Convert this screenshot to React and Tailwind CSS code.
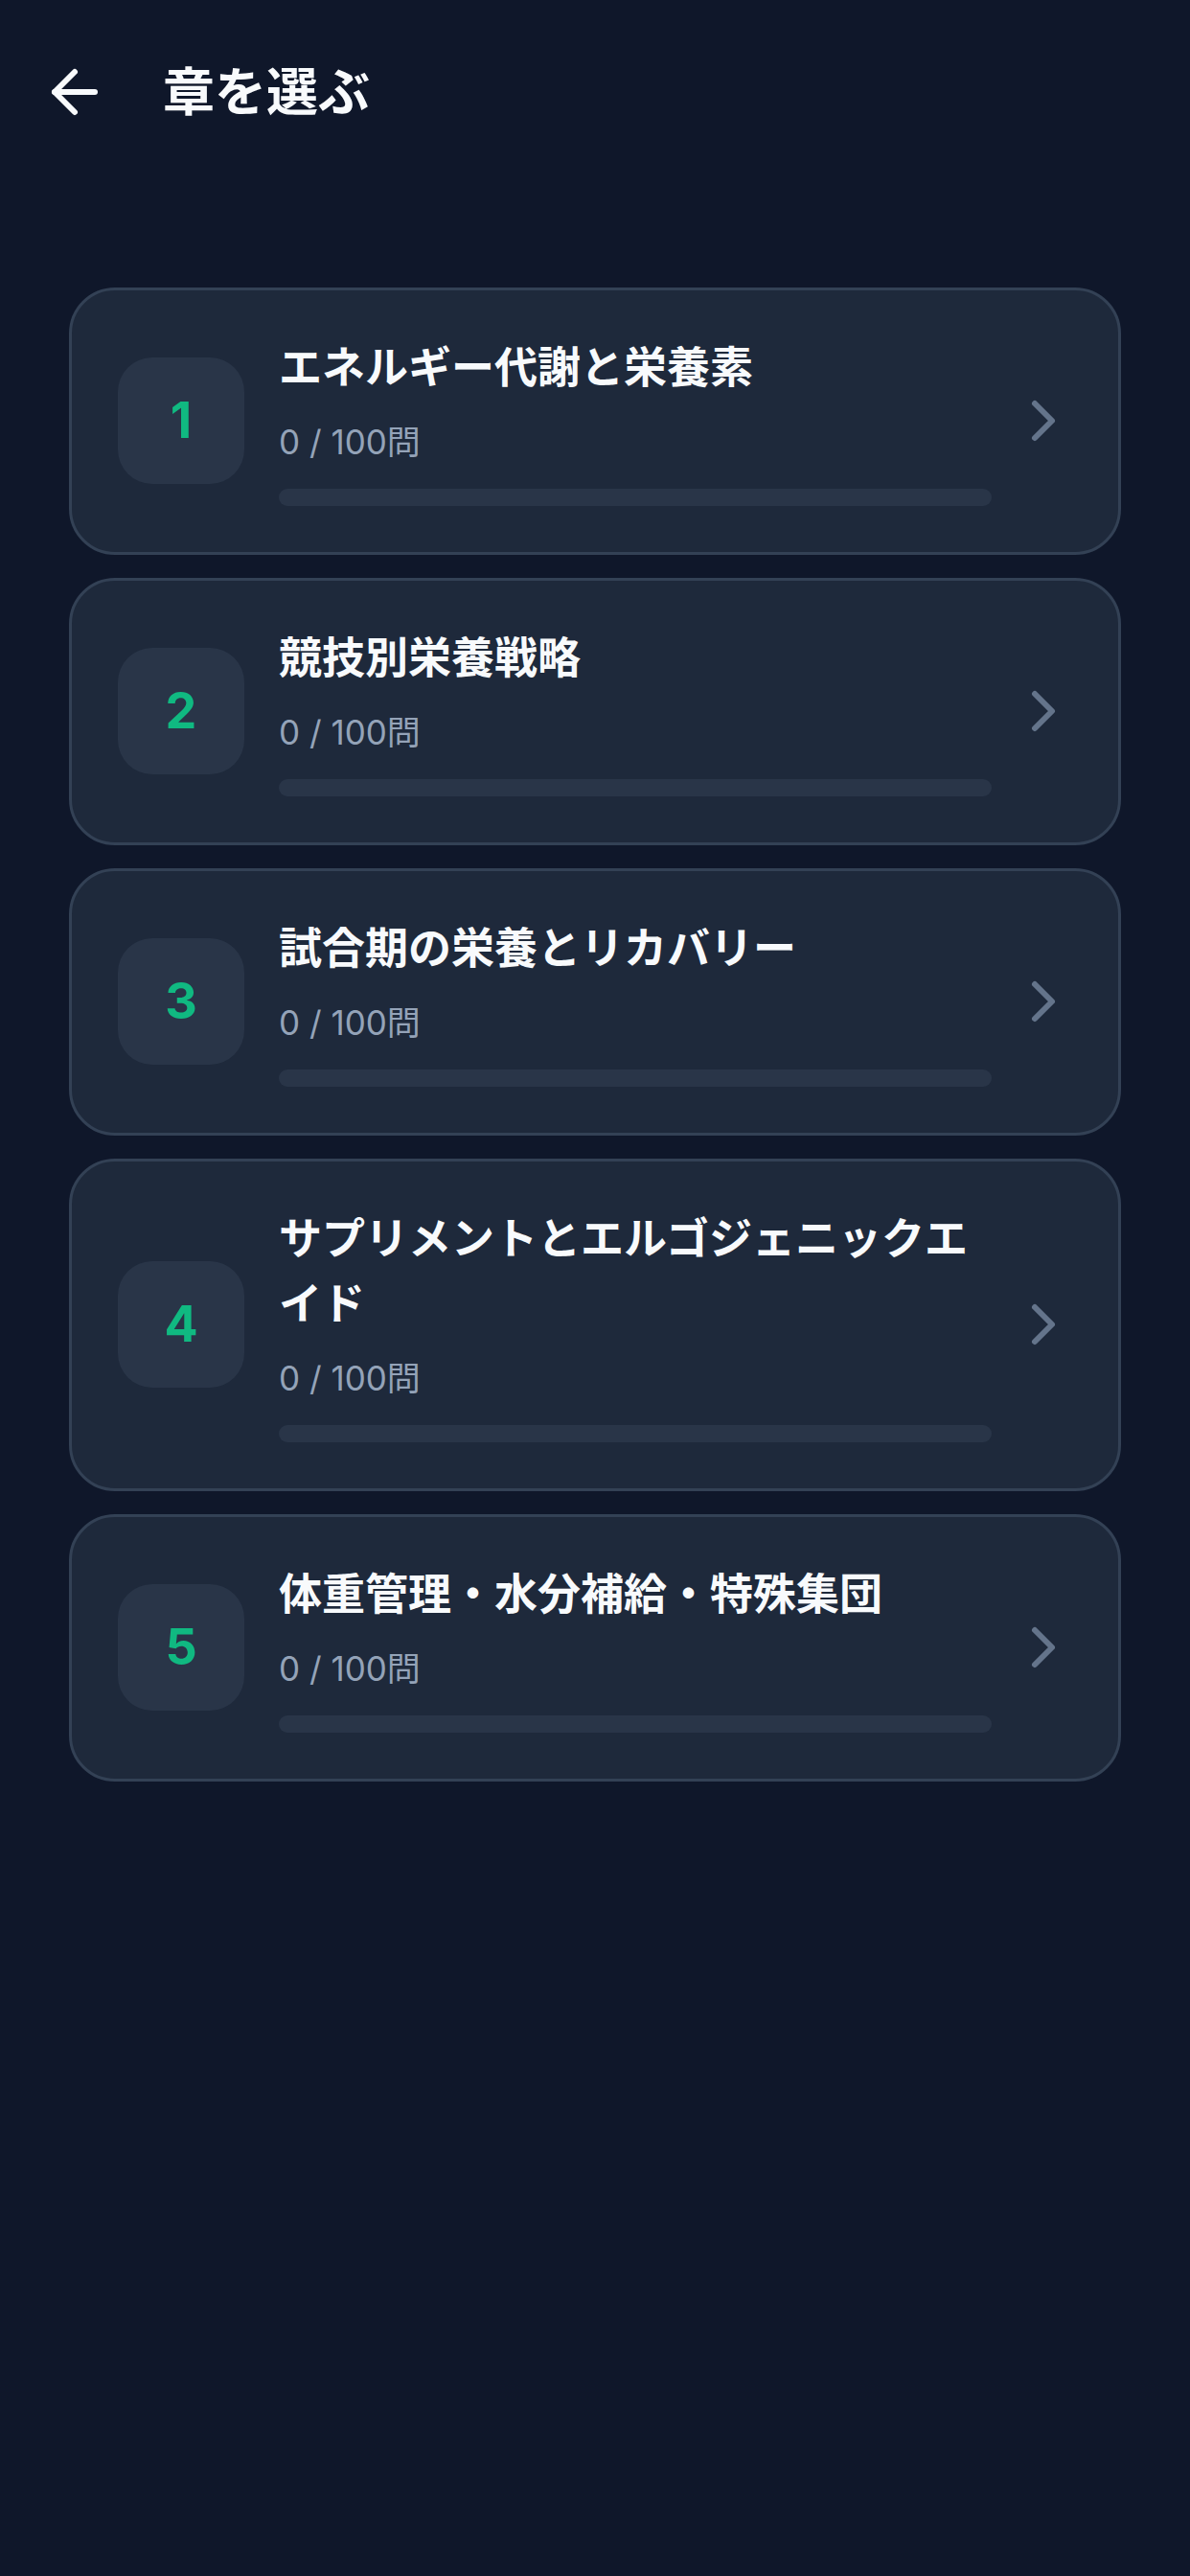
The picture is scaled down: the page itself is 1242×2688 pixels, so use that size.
import { ArrowLeft, ChevronRight } from "lucide-react";

const chapters = [
  { id: 1, title: "エネルギー代謝と栄養素", done: 0, total: 100 },
  { id: 2, title: "競技別栄養戦略", done: 0, total: 100 },
  { id: 3, title: "試合期の栄養とリカバリー", done: 0, total: 100 },
  { id: 4, title: "サプリメントとエルゴジェニックエイド", done: 0, total: 100 },
  { id: 5, title: "体重管理・水分補給・特殊集団", done: 0, total: 100 },
];

const ChapterCard = ({ chapter }) => {
  const pct = chapter.total ? (chapter.done / chapter.total) * 100 : 0;

  return (
    <button
      type="button"
      className="flex w-full items-center rounded-[48px] border-[3px] border-[#334155] bg-[#1e293b] pt-[47px] pb-[48px] pl-[48px] pr-[42px] text-left"
    >
      <div className="flex h-[132px] w-[132px] shrink-0 items-center justify-center rounded-[36px] bg-[#293548]">
        <span className="text-[52px] font-bold text-[#10b981]">{chapter.id}</span>
      </div>
      <div className="ml-[36px] min-w-0 flex-1">
        <h2 className="text-[45px] font-bold leading-[68px] text-[#f8fafc]">{chapter.title}</h2>
        <p className="mt-[15px] text-[35px] leading-[56px] text-[#94a3b8]">
          {chapter.done} / {chapter.total}問
        </p>
        <div className="mt-[21px] h-[18px] w-full overflow-hidden rounded-full bg-[#293548]">
          <div className="h-full rounded-full bg-[#10b981]" style={{ width: `${pct}%` }} />
        </div>
      </div>
      <ChevronRight className="ml-[18px] h-[72px] w-[72px] shrink-0 text-[#64748b]" strokeWidth={2} />
    </button>
  );
};

const App = () => {
  return (
    <div className="min-h-screen bg-[#0f172a] font-['Inter','Noto_Sans_CJK_JP',sans-serif]">
      <header className="flex h-[192px] items-center px-[42px]">
        <button type="button" className="flex h-[72px] w-[72px] items-center justify-center text-[#f8fafc]">
          <ArrowLeft className="h-[72px] w-[72px]" strokeWidth={2} />
        </button>
        <h1 className="mb-[7px] ml-[56px] font-['Noto_Sans_CJK_JP',sans-serif] text-[54px] font-bold text-[#f8fafc]">章を選ぶ</h1>
      </header>

      <main className="flex flex-col gap-[24px] px-[72px] pt-[108px]">
        {chapters.map((chapter) => (
          <ChapterCard key={chapter.id} chapter={chapter} />
        ))}
      </main>
    </div>
  );
};

export default App;
